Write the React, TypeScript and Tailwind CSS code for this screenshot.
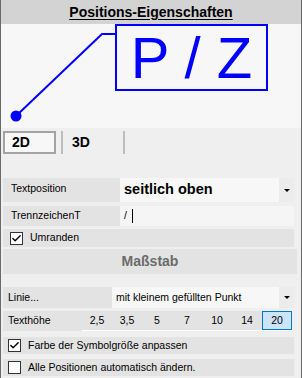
import { Check } from 'lucide-react'

const heights = ['2,5', '3,5', '5', '7', '10', '14', '20']

function CheckBox({ checked }: { checked: boolean }) {
  return (
    <span className="flex h-[13px] w-[13px] items-center justify-center border border-[#333] bg-white">
      {checked && <Check size={11} strokeWidth={3} className="text-black" />}
    </span>
  )
}

function DropArrow() {
  return (
    <div className="flex w-[15px] items-center justify-center bg-[#ececec]">
      <span className="h-0 w-0 border-x-[3px] border-t-[3px] border-x-transparent border-t-black" />
    </div>
  )
}

export default function App() {
  const selected = '20'

  return (
    <div className="h-[378px] w-[302px] overflow-hidden border-x border-[#6a6a6a] bg-[#efefef] font-['Liberation_Sans',Arial,sans-serif] text-[10.5px] text-black">
      <div className="flex h-[24px] items-center justify-center bg-[#d3d3d3]">
        <span className="text-[14px] font-bold underline underline-offset-2">Positions-Eigenschaften</span>
      </div>

      <div className="relative h-[104px] bg-[#f7f7f7]">
        <svg className="absolute left-0 top-0" width="120" height="104">
          <polyline points="114,10 101,10 15,92" fill="none" stroke="#0000ff" strokeWidth="2" />
          <circle cx="15" cy="92" r="5.5" fill="#0000ff" />
        </svg>
        <div className="absolute left-[114px] top-0 flex h-[67px] w-[153px] items-center justify-center border-2 border-[#0000ff] text-[58px] leading-none text-[#0000ff]">
          P / Z
        </div>
      </div>

      <div className="mt-[3px] flex h-[23px] pl-[2px]">
        <div className="flex w-[53px] items-center border-2 border-[#a3a3a3] bg-[#f7f7f7] pl-[7px] text-[14px] font-bold">
          2D
        </div>
        <div className="ml-[5px] flex w-[64px] items-center border-x-2 border-[#bdbdbd] pl-[9px] text-[14px] font-bold">
          3D
        </div>
      </div>

      <div className="mt-[24px] flex flex-col pl-[2px] pr-[7px]">
        <div className="flex h-[24px]">
          <div className="w-[117px] bg-[#e3e3e3] pl-[8px] pt-[3px]">Textposition</div>
          <div className="flex flex-1 items-center bg-[#f7f7f7] pl-[4px] text-[14.5px] font-bold">seitlich oben</div>
          <DropArrow />
        </div>

        <div className="mt-[4px] flex h-[20px]">
          <div className="flex w-[117px] items-center bg-[#e3e3e3] pl-[8px]">TrennzeichenT</div>
          <div className="flex flex-1 items-center bg-[#f5f5f5] pl-[4px]">
            <span>/</span>
            <span className="ml-[5px] h-[14px] w-px bg-black" />
          </div>
        </div>

        <div className="mt-[3px] flex h-[18px] items-center gap-[7px] bg-[#e3e3e3] pl-[7px]">
          <CheckBox checked />
          <span>Umranden</span>
        </div>

        <div className="mt-[2px] -mr-[3px] flex h-[25px] items-center justify-center bg-[#e3e3e3] text-[14px] font-bold text-[#6b6b6b]">
          Maßstab
        </div>

        <div className="mt-[13px] flex h-[21px]">
          <div className="flex w-[109px] items-center bg-[#e3e3e3] pl-[5px]">Linie...</div>
          <div className="flex flex-1 items-center bg-[#f7f7f7] pl-[4px]">mit kleinem gefüllten Punkt</div>
          <DropArrow />
        </div>

        <div className="mt-[3px] flex h-[20px]">
          <div className="flex w-[79px] items-center bg-[#e3e3e3] pl-[5px]">Texthöhe</div>
          <div className="flex border-b border-white">
            {heights.map((h) => (
              <div
                key={h}
                className={
                  h === selected
                    ? 'flex w-[30px] items-center justify-center border border-[#0078d7] bg-[#cce4f7]'
                    : 'flex w-[30px] items-center justify-center bg-[#e3e3e3]'
                }
              >
                {h}
              </div>
            ))}
          </div>
        </div>

        <div className="mt-[6px] flex h-[17px] items-center gap-[7px] bg-[#e3e3e3] pl-[5px]">
          <CheckBox checked />
          <span>Farbe der Symbolgröße anpassen</span>
        </div>

        <div className="mt-[5px] flex h-[17px] items-center gap-[7px] bg-[#e3e3e3] pl-[5px]">
          <CheckBox checked={false} />
          <span>Alle Positionen automatisch ändern.</span>
        </div>
      </div>
    </div>
  )
}
